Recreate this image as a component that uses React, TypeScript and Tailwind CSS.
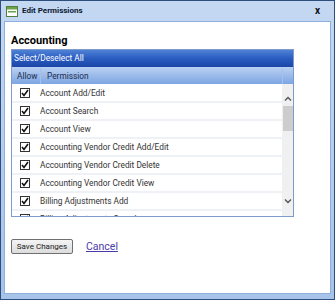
const permissions = [
  'Account Add/Edit',
  'Account Search',
  'Account View',
  'Accounting Vendor Credit Add/Edit',
  'Accounting Vendor Credit Delete',
  'Accounting Vendor Credit View',
  'Billing Adjustments Add',
  'Billing Adjustments Search',
];

const Check = () => (
  <div className="flex h-[10px] w-[10px] items-center justify-center border border-[#333] bg-white">
    <svg width="8" height="8" viewBox="0 0 8 8">
      <path d="M1 4 L3 6.5 L7 1" fill="none" stroke="#111" strokeWidth="1.6" />
    </svg>
  </div>
);

const App = () => {
  return (
    <div
      className="h-[300px] w-[335px] overflow-hidden border border-[#2e4f7e] bg-gradient-to-b from-[#c4d8f2] to-[#a7c3ea] p-[3px] pt-0"
      style={{ fontFamily: 'Roboto, "Open Sans", sans-serif' }}
    >
      {/* title bar */}
      <div className="flex h-[20px] items-center pl-[2px] pr-[11px]">
        <svg width="12" height="11" viewBox="0 0 12 11">
          <rect x="0.5" y="0.5" width="11" height="10" fill="#fff" stroke="#4f7f3a" />
          <rect x="1" y="1" width="10" height="2.5" fill="#6ba24a" />
          <rect x="2" y="5" width="8" height="1.5" fill="#6ba24a" />
        </svg>
        <span className="ml-[4px] text-[8px] font-bold text-[#0b1a33]">Edit Permissions</span>
        <span className="ml-auto text-[10px] font-bold leading-none text-[#111]">x</span>
      </div>

      {/* body */}
      <div className="h-[273px] border border-[#8fb0dc] bg-white px-[6px] pt-[12px]">
        <div className="text-[11px] font-bold leading-[14px] text-black">Accounting</div>

        <div className="mt-[1px] w-[283px] border border-[#7f9bcc]">
          <div className="flex h-[17px] items-center bg-gradient-to-b from-[#4f82d6] via-[#2a5cc0] to-[#1a46a6] pl-[2px] text-[8.3px] text-white">
            Select/Deselect All
          </div>
          <div className="flex h-[17px] items-center border-t border-[#b9cff2] bg-gradient-to-b from-[#b7cef1] to-[#7da6e2] text-[8.3px] text-[#1b2b4b]">
            <div className="w-[29px] border-r border-[#a5c0ea] pl-[5px] leading-[16px]">Allow</div>
            <div className="flex-1 pl-[6px]">Permission</div>
            <div className="h-full w-[11px] border-l border-[#a5c0ea]" />
          </div>
          <div className="flex h-[132px]">
            <div className="flex-1 overflow-hidden pt-[1px]">
              {permissions.map((p) => (
                <div key={p} className="flex h-[18px] items-center border-b-2 border-[#eef1f5]">
                  <div className="w-[28px] pl-[8px]">
                    <Check />
                  </div>
                  <div className="text-[8.3px] text-[#333]">{p}</div>
                </div>
              ))}
            </div>
            <div className="flex w-[11px] flex-col items-center bg-[#f0f0f0] pt-[12px]">
              <svg width="8" height="5" viewBox="0 0 8 5">
                <path d="M1 4.5 L4 1.5 L7 4.5" fill="none" stroke="#555" strokeWidth="1.4" />
              </svg>
              <div className="mt-[5px] h-[25px] w-[10px] bg-[#cdcdcd]" />
              <div className="flex-1" />
              <svg className="mb-[12px]" width="8" height="5" viewBox="0 0 8 5">
                <path d="M1 0.5 L4 3.5 L7 0.5" fill="none" stroke="#555" strokeWidth="1.4" />
              </svg>
            </div>
          </div>
        </div>

        <div className="mt-[22px] flex items-center">
          <button className="h-[15px] w-[62px] rounded-[2px] border border-[#707070] bg-gradient-to-b from-[#f4f4f4] to-[#dcdcdc] text-[8px] leading-none text-[#222]">
            Save Changes
          </button>
          <a className="ml-[13px] text-[10.5px] text-[#4b3aa8] underline">Cancel</a>
        </div>
      </div>
    </div>
  );
};

export default App;
